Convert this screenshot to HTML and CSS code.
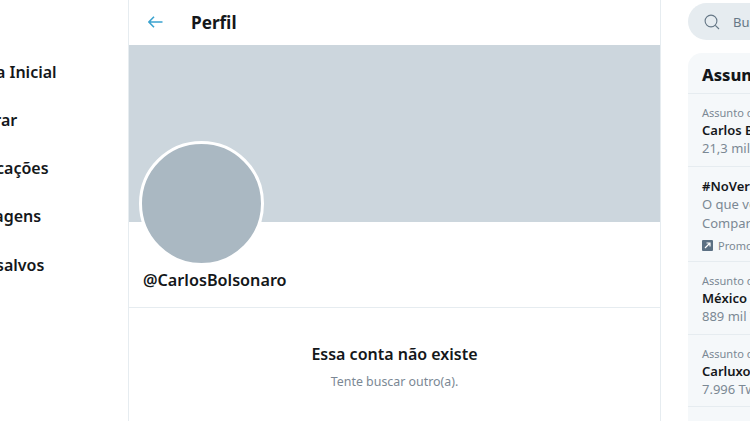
FILE: index.html
```html
<!DOCTYPE html>
<html lang="pt">
  <head>
    <meta charset="UTF-8" />
    <title>Perfil</title>
    <link rel="stylesheet" href="styles.css">
  </head>
  <body>
    <nav class="nav">
      <div class="nav-item">Página Inicial</div>
      <div class="nav-item">Explorar</div>
      <div class="nav-item">Notificações</div>
      <div class="nav-item">Mensagens</div>
      <div class="nav-item">Itens salvos</div>
    </nav>

    <main class="main">
      <header class="topbar">
        <svg class="back" viewBox="0 0 15 12" width="15" height="12">
          <path d="M14.5 6H1M6 .8L.9 6L6 11.2" />
        </svg>
        <h2 class="topbar-title">Perfil</h2>
      </header>
      <div class="banner"></div>
      <div class="profile">
        <div class="avatar"></div>
        <div class="handle">@CarlosBolsonaro</div>
      </div>
      <div class="empty">
        <h3 class="empty-title">Essa conta não existe</h3>
        <p class="empty-text">Tente buscar outro(a).</p>
      </div>
    </main>

    <aside class="side">
      <div class="search">
        <svg class="search-icon" viewBox="0 0 16 16" width="16" height="16">
          <circle cx="7" cy="7" r="5.9" />
          <path d="M11.3 11.3L15 15" />
        </svg>
        <span>Buscar no Twitter</span>
      </div>
      <section class="trends">
        <h3 class="trends-title">Assuntos do momento</h3>
        <div class="trend">
          <div class="trend-meta">Assunto do momento</div>
          <div class="trend-name">Carlos Bolsonaro</div>
          <div class="trend-meta big">21,3 mil Tweets</div>
        </div>
        <div class="trend">
          <div class="trend-name">#NoVeraoEuVou</div>
          <div class="trend-meta big">O que você vai fazer?</div>
          <div class="trend-meta big">Compartilhe</div>
          <div class="promo">
            <svg viewBox="0 0 11 11" width="11" height="11">
              <rect width="11" height="11" rx="1" fill="#5b7083" />
              <path d="M3 8L8 3M4.5 3H8V6.5" fill="none" stroke="#fff" stroke-width="1.2" />
            </svg>
            <span>Promovido por</span>
          </div>
        </div>
        <div class="trend">
          <div class="trend-meta">Assunto do momento</div>
          <div class="trend-name">México</div>
          <div class="trend-meta big">889 mil Tweets</div>
        </div>
        <div class="trend">
          <div class="trend-meta">Assunto do momento</div>
          <div class="trend-name">Carluxo</div>
          <div class="trend-meta big">7.996 Tweets</div>
        </div>
      </section>
    </aside>
  </body>
</html>
```

FILE: styles.css
```css
body {
  margin: 0;
  height: 421px;
  overflow: hidden;
  display: flex;
  background-color: #fff;
  color: #14171a;
  font-family: 'Noto Sans', 'Open Sans', sans-serif;
}
h2,
h3,
p {
  margin: 0;
}

.nav {
  flex: 0 0 176px;
  margin-left: -48px;
  padding-top: 47.5px;
  box-sizing: border-box;
}
.nav-item {
  height: 48.25px;
  line-height: 48px;
  font-size: 16px;
  font-weight: 600;
  white-space: nowrap;
}

.main {
  flex: 0 0 533px;
  box-sizing: border-box;
  border-left: 1px solid #e6ecf0;
  border-right: 1px solid #e6ecf0;
}
.topbar {
  height: 45px;
  display: flex;
  align-items: center;
  padding-left: 19px;
  gap: 28px;
  box-sizing: border-box;
}
.back {
  margin-bottom: 2px;
  fill: none;
  stroke: #3ba3cf;
  stroke-width: 1.6;
}
.topbar-title {
  font-size: 17.2px;
  font-weight: 700;
  line-height: 45px;
}
.banner {
  height: 177px;
  background-color: #ccd6dd;
}
.profile {
  height: 86px;
  box-sizing: border-box;
  padding: 45px 0 0 14px;
  border-bottom: 1px solid #e6ecf0;
  position: relative;
}
.avatar {
  position: absolute;
  left: 10px;
  top: -81px;
  width: 119px;
  height: 119px;
  border: 3px solid #fff;
  border-radius: 50%;
  background-color: #aab8c2;
}
.handle {
  font-size: 16.2px;
  font-weight: 600;
  line-height: 26px;
}
.empty {
  padding-top: 33px;
  text-align: center;
}
.empty-title {
  font-size: 16px;
  font-weight: 600;
  line-height: 26px;
}
.empty-text {
  margin-top: 5px;
  font-size: 12.4px;
  line-height: 20px;
  color: #7b8894;
}

.side {
  flex: 0 0 340px;
  margin-left: 27px;
}
.search {
  height: 37px;
  margin-top: 3px;
  display: flex;
  align-items: center;
  gap: 13px;
  padding-left: 16px;
  border-radius: 19px;
  background-color: #e6ecf0;
  font-size: 13px;
  color: #657786;
}
.search-icon {
  fill: none;
  stroke: #657786;
  stroke-width: 1.1;
}
.trends {
  margin-top: 13px;
  padding-bottom: 30px;
  border-radius: 14px;
  background-color: #f5f8fa;
}
.trends-title {
  height: 40px;
  padding-left: 14px;
  font-size: 16.5px;
  font-weight: 800;
  line-height: 44px;
  border-bottom: 1px solid #e6ecf0;
}
.trend {
  padding: 10px 14px 7.5px;
  border-bottom: 1px solid #e6ecf0;
}
.trend-meta {
  font-size: 11px;
  line-height: 17px;
  color: #7b8894;
}
.trend-meta.big {
  font-size: 13px;
  line-height: 19px;
}
.trend-name {
  font-size: 13px;
  font-weight: 600;
  line-height: 18px;
}
.promo {
  display: flex;
  align-items: center;
  gap: 5px;
  margin-top: 4px;
  font-size: 11px;
  line-height: 17px;
  color: #7b8894;
}
```
